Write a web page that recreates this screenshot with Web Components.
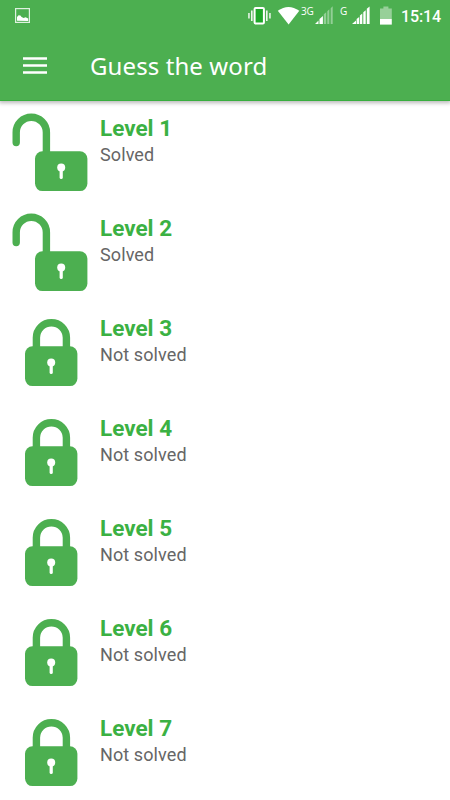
<!DOCTYPE html>
<html lang="en">
<head>
<meta charset="utf-8">
<title>Guess the word</title>
<style>
  body {
    margin: 0;
    width: 450px;
    height: 800px;
    overflow: hidden;
    background: #fff;
    font-family: Roboto, sans-serif;
    --green: #4caf50;
    --title: #3bb143;
  }
</style>
</head>
<body>
<guess-app></guess-app>

<script>
  // android status bar, the icons keep their own viewBox in screen pixels
  class StatusBar extends HTMLElement {
    connectedCallback() {
      const root = this.attachShadow({ mode: 'open' });
      root.innerHTML = `
        <style>
          :host {
            display: flex;
            align-items: flex-start;
            height: 32px;
            color: #fff;
          }
          svg { display: block; flex: none; fill: #fff; }
          .left { margin-left: 15px; }
          .right { margin-left: auto; display: flex; }
          .net { font: 500 10px/12px "Open Sans", sans-serif; margin-top: 5px; height: 12px; white-space: nowrap; }
          .g3 { width: 14px; letter-spacing: -.3px; }
          .g { width: 11px; }
          .time { font: 500 16px/20px Roboto, sans-serif; width: 49px; margin-top: 7px; letter-spacing: -.1px; }
        </style>
        <svg class="left" width="15" height="32" viewBox="15 0 15 32">
          <rect x="15.6" y="8.6" width="13.8" height="13.8" fill="none" stroke="#dff1e0" stroke-width="1.2"/>
          <path d="M17 20.8v-3.8l1.6-1.8 1.8.2 1.2 1.6 2 1 2-.8 2.6 1.4v2.4z"/>
        </svg>
        <div class="right">
          <svg width="53" height="32" viewBox="248 0 53 32">
            <rect x="254.6" y="8.1" width="9.3" height="15.4" rx="1" fill="#1fa82a" stroke="#fff" stroke-width="2"/>
            <path d="M251 10.5h1.6v10.4H251zM248.2 13h1.5v5.5h-1.5zM266 10.5h1.6v10.4H266zM269.2 13h1.5v5.5h-1.5z" opacity=".9"/>
            <path d="M277.8 10.8Q288.5 3 299.3 10.8L288.6 24.6z"/>
          </svg>
          <span class="net g3">3G</span>
          <svg width="25" height="32" viewBox="315 0 25 32">
            <path d="M315 24l3.5-3.6V24zM319.5 24v-5l3.4-3v8z"/>
            <path d="M323.8 24V14.2l2.4-2V24zM327.3 24V11.2l2-2V24zM330.7 24V8.2l2-2V24z" opacity=".4"/>
          </svg>
          <span class="net g">G</span>
          <svg width="50" height="32" viewBox="351 0 50 32">
            <path d="M352 24l4-3.6V24zM356.6 24v-5l2.6-2v7zM359.9 24v-8.6l2.4-2V24zM363.3 24V12.2l2.4-2V24zM366.8 24V8.8l2.8-2.3V24z"/>
            <path d="M380 19V8.5h3.4V6.6h5v1.9h3.4V19z" opacity=".42"/>
            <path d="M380 19h11.8v5.6H380z"/>
          </svg>
          <span class="time">15:14</span>
        </div>`;
    }
  }
  customElements.define('status-bar', StatusBar);

  class AppBar extends HTMLElement {
    connectedCallback() {
      const root = this.attachShadow({ mode: 'open' });
      root.innerHTML = `
        <style>
          :host {
            display: block;
            position: relative;
            z-index: 1;
            height: 100px;
            background: var(--green);
            box-shadow: 0 1px 0 #38ae3e, 0 2px 4px 1px rgba(0, 0, 0, .28);
          }
          .bar { display: flex; height: 68px; align-items: center; color: #fff; }
          svg { display: block; margin-left: 23px; }
          h1 {
            margin: 0 0 0 43px;
            font: 400 24px/32px "Noto Sans", sans-serif;
            letter-spacing: .1px;
          }
        </style>
        <status-bar></status-bar>
        <div class="bar">
          <svg width="24" height="20" viewBox="0 0 24 20" fill="#fff">
            <path d="M0 1.2h24v2.6H0zM0 8.2h24v2.6H0zM0 15.2h24v2.6H0z"/>
          </svg>
          <h1><slot></slot></h1>
        </div>`;
    }
  }
  customElements.define('app-bar', AppBar);

  class LockIcon extends HTMLElement {
    connectedCallback() {
      const open = this.hasAttribute('open');
      const shackle = open
        ? 'M16.2 42.6V32.4a15.1 15.1 0 0 1 30.2 0V56'
        : 'M36.4 50V37.8a15 15 0 0 1 30 0V50';
      // the body sits 10px right and 5px lower when the lock is open
      const move = open ? 'translate(10 5)' : '';
      const root = this.attachShadow({ mode: 'open' });
      root.innerHTML = `
        <style>
          :host { display: block; width: 100px; height: 100px; flex: none; }
          svg { display: block; }
        </style>
        <svg width="100" height="100" viewBox="0 0 100 100">
          <path d="${shackle}" fill="none" stroke="#4caf50" stroke-width="7.4" stroke-linecap="round"/>
          <g transform="${move}">
            <rect x="25" y="46.3" width="52.4" height="39.8" rx="7.5" fill="#4caf50"/>
            <circle cx="51.2" cy="62.6" r="4" fill="#fff"/>
            <path d="M51.2 63v9.4" stroke="#fff" stroke-width="3.2" stroke-linecap="round"/>
          </g>
        </svg>`;
    }
  }
  customElements.define('lock-icon', LockIcon);

  class LevelRow extends HTMLElement {
    connectedCallback() {
      const solved = this.hasAttribute('solved');
      const root = this.attachShadow({ mode: 'open' });
      root.innerHTML = `
        <style>
          :host { display: flex; height: 100px; }
          .text { padding-top: 15px; }
          .name { font: 700 22.5px/27px Roboto, sans-serif; color: var(--title); }
          .state { font: 400 18px/26px Roboto, sans-serif; color: #666; letter-spacing: .1px; }
        </style>
        <lock-icon ${solved ? 'open' : ''}></lock-icon>
        <div class="text">
          <div class="name"><slot></slot></div>
          <div class="state">${solved ? 'Solved' : 'Not solved'}</div>
        </div>`;
    }
  }
  customElements.define('level-row', LevelRow);

  class GuessApp extends HTMLElement {
    connectedCallback() {
      const root = this.attachShadow({ mode: 'open' });
      let rows = '';
      for (let i = 1; i <= 7; i++) {
        rows += `<level-row ${i <= 2 ? 'solved' : ''}>Level ${i}</level-row>`;
      }
      root.innerHTML = `
        <style>
          :host { display: flex; flex-direction: column; height: 800px; }
        </style>
        <app-bar>Guess the word</app-bar>
        <main>${rows}</main>`;
    }
  }
  customElements.define('guess-app', GuessApp);
</script>
</body>
</html>
